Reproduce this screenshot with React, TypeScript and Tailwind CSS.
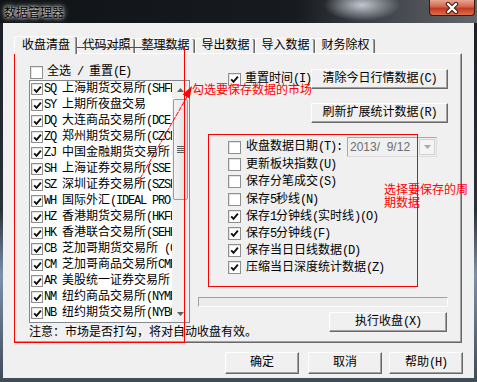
import React from "react";

const ui = "font-['Liberation_Mono','Noto_Sans_CJK_SC',monospace]";
const hei = "font-['Noto_Sans_CJK_SC',sans-serif]";

const markets: [string, string][] = [
  ["SQ", "上海期货交易所(SHFE)"],
  ["SY", "上期所夜盘交易"],
  ["DQ", "大连商品交易所(DCE)"],
  ["ZQ", "郑州期货交易所(CZCE)"],
  ["ZJ", "中国金融期货交易所(CFFEX)"],
  ["SH", "上海证券交易所(SSE)"],
  ["SZ", "深圳证券交易所(SZSE)"],
  ["WH", "国际外汇(IDEAL PRO)"],
  ["HZ", "香港期货交易所(HKFE)"],
  ["HK", "香港联合交易所(SEHK)"],
  ["CB", "芝加哥期货交易所 (CBOT)"],
  ["CM", "芝加哥商品交易所CME"],
  ["AR", "美股统一证券交易所"],
  ["NM", "纽约商品交易所(NYMEX)"],
  ["NB", "纽约期货交易所(NYBOT)"],
];

const periods: { label: string; checked: boolean; gap?: boolean }[] = [
  { label: "更新板块指数(U)", checked: false },
  { label: "保存分笔成交(S)", checked: false },
  { label: "保存5秒线(N)", checked: false, gap: true },
  { label: "保存1分钟线(实时线)(O)", checked: true },
  { label: "保存5分钟线(F)", checked: true },
  { label: "保存当日日线数据(D)", checked: true },
  { label: "压缩当日深度统计数据(Z)", checked: true },
];

const tabs = [
  { label: "代码对照", w: "w-[58px]" },
  { label: "整理数据", w: "w-[60px]" },
  { label: "导出数据", w: "w-[60px]" },
  { label: "导入数据", w: "w-[60px]" },
  { label: "财务除权", w: "w-[60px]" },
];

// half-width (ascii) runs squeezed to 6px per char, like the old bitmap font
const T = ({ s }: { s: string }) => (
  <>
    {s
      .split(/([\x20-\x7e]+)/)
      .filter(Boolean)
      .map((part, i) =>
        /^[\x20-\x7e]+$/.test(part) ? (
          <span key={i} className="tracking-[-1.2px]">
            {part}
          </span>
        ) : (
          <span key={i}>{part}</span>
        )
      )}
  </>
);

const Box = ({ checked = false, small = false }: { checked?: boolean; small?: boolean }) => (
  <span
    className={`flex shrink-0 items-center justify-center border border-[#8e8f8f] bg-white shadow-[inset_1px_1px_0_#e4e4e4] ${
      small ? "h-[12px] w-[12px]" : "h-[13px] w-[13px]"
    }`}
  >
    {checked && (
      <svg width="9" height="9" viewBox="0 0 9 9">
        <path d="M1.2 4.4L3.5 6.9L7.9 1.6" fill="none" stroke="#111" strokeWidth="1.9" />
      </svg>
    )}
  </span>
);

const Btn = ({ label, className = "" }: { label: string; className?: string }) => (
  <button
    className={`flex shrink-0 items-center justify-center whitespace-nowrap border border-b-[#696969] border-l-white border-r-[#696969] border-t-white bg-[#f0f0f0] text-[12px] leading-[14px] text-black shadow-[inset_-1px_-1px_0_#a0a0a0] ${ui} ${className}`}
  >
    <T s={label} />
  </button>
);

const ScrollBar = () => (
  <div className="flex w-[17px] flex-col bg-[#f0f0f0]">
    <div className="flex h-[17px] items-center justify-center">
      <svg width="7" height="4" viewBox="0 0 7 4">
        <path d="M0 4L3.5 0L7 4Z" fill="#606060" />
      </svg>
    </div>
    <div className="mx-[1px] mt-[1px] flex h-[101px] items-center justify-center rounded-[2px] border border-[#9b9b9b] bg-[linear-gradient(90deg,#f3f3f3,#e2e2e2)]">
      <div className="flex flex-col gap-[1px]">
        <span className="h-[1px] w-[7px] bg-[#5c5c5c]" />
        <span className="h-[1px] w-[7px] bg-[#5c5c5c]" />
        <span className="h-[1px] w-[7px] bg-[#5c5c5c]" />
        <span className="h-[1px] w-[7px] bg-[#5c5c5c]" />
      </div>
    </div>
    <div className="flex-1" />
    <div className="flex h-[17px] items-center justify-center">
      <svg width="7" height="4" viewBox="0 0 7 4">
        <path d="M0 0L3.5 4L7 0Z" fill="#606060" />
      </svg>
    </div>
  </div>
);

export default function App() {
  return (
    <div className="relative h-[382px] w-[477px] overflow-hidden bg-[linear-gradient(180deg,#1b1f24_0%,#2b3139_55%,#7c90aa_72%,#3f4a57_100%)] text-[12px] text-black">
      {/* title bar */}
      <div className="flex h-[23px] bg-[radial-gradient(ellipse_38px_16px_at_362px_5px,#c2c8d0,transparent),linear-gradient(90deg,#101316_0%,#171b20_62%,#3a3e44_76%,#62666b_100%)]">
        <span
          className={`self-center pl-[4px] text-[12px] leading-[16px] text-black [text-shadow:0_0_6px_#ffffff,0_0_3px_#ffffff] ${hei}`}
        >
          数据管理器
        </span>
        <div className="ml-auto mr-[2px] flex h-[16px] w-[46px] items-center justify-center rounded-b-[4px] border border-t-0 border-[#4a1208] bg-[linear-gradient(180deg,#e8a594_0%,#d4654d_45%,#c13a1e_55%,#de6e4e_100%)]">
          <svg width="16" height="12" viewBox="0 0 16 12">
            <path d="M4 2L12 10M12 2L4 10" stroke="#3b1c16" strokeWidth="4.4" strokeLinecap="round" />
            <path d="M4 2L12 10M12 2L4 10" stroke="#ffffff" strokeWidth="2.4" strokeLinecap="round" />
          </svg>
        </div>
      </div>

      {/* client area */}
      <div className={`mx-[3px] h-[355px] bg-[#f0f0f0] pl-[11px] pt-[13px] ${ui}`}>
        {/* tabs */}
        <div className="flex h-[17px] items-end">
          <div className="relative z-10 -mb-[1px] flex h-[18px] w-[63px] items-center justify-center rounded-t-[2px] border-l border-t border-l-white border-t-white bg-[#f0f0f0] shadow-[inset_-1px_0_0_#696969,inset_-2px_0_0_#a0a0a0] leading-[14px]">
            收盘清盘
          </div>
          {tabs.map((t) => (
            <div
              key={t.label}
              className={`flex h-[15px] ${t.w} items-center justify-center rounded-t-[2px] border-l border-t border-l-white border-t-white shadow-[inset_-1px_0_0_#696969,inset_-2px_0_0_#a0a0a0] leading-[14px]`}
            >
              {t.label}
            </div>
          ))}
        </div>

        {/* tab page */}
        <div className="relative flex h-[290px] w-[448px] border border-b-[#696969] border-l-white border-r-[#696969] border-t-white shadow-[inset_-1px_-1px_0_#a0a0a0]">
          {/* markets */}
          <div className="ml-[14px] flex w-[161px] flex-col pt-[11px]">
            <div className="flex h-[14px] items-center pl-[1px]">
              <Box />
              <span className="ml-[4px] whitespace-nowrap leading-[14px]">
                <T s="全选 / 重置(E)" />
              </span>
            </div>
            <div className="mt-[1px] flex h-[243px] border border-[#828790] bg-white">
              <div className="flex-1 overflow-hidden">
                {markets.map(([code, name]) => (
                  <div key={code} className="flex h-[16px] items-center whitespace-nowrap pl-[1px]">
                    <Box checked small />
                    <span className="ml-[1px] leading-[16px]">
                      <T s={`${code} ${name}`} />
                    </span>
                  </div>
                ))}
              </div>
              <ScrollBar />
            </div>
            <div className="mt-[2px] h-[16px] whitespace-nowrap leading-[16px]">
              注意：市场是否打勾，将对自动收盘有效。
            </div>
          </div>

          {/* options */}
          <div className="ml-[8px] flex w-[250px] flex-col">
            <div className="mt-[15px] flex h-[20px] items-center">
              <span className="ml-[30px]">
                <Box checked />
              </span>
              <span className="ml-[4px] whitespace-nowrap leading-[14px]">
                <T s="重置时间(I)" />
              </span>
              <Btn className="ml-auto h-[20px] w-[137px]" label="清除今日行情数据(C)" />
            </div>
            <div className="mt-[14px] flex h-[20px] justify-end">
              <Btn className="h-[20px] w-[137px]" label="刷新扩展统计数据(R)" />
            </div>
            <div className="mt-[14px] flex h-[20px] items-center">
              <span className="ml-[30px]">
                <Box />
              </span>
              <span className="ml-[5px] whitespace-nowrap leading-[14px]">
                <T s="收盘数据日期(T):" />
              </span>
              <div className="ml-auto mr-[11px] flex h-[20px] w-[90px] items-center border border-b-[#dcdcdc] border-l-[#a8a8a8] border-r-[#dcdcdc] border-t-[#a8a8a8] bg-[#f0f0f0]">
                <span className="flex-1 pl-[2px] font-['Liberation_Sans',sans-serif] text-[12px] leading-[14px] text-[#6d6d6d]">
                  2013/&nbsp;&nbsp;9/12
                </span>
                <span className="mr-[1px] flex h-[16px] w-[16px] items-center justify-center border border-[#d2d2d2] bg-[#f4f4f4]">
                  <svg width="7" height="4" viewBox="0 0 7 4">
                    <path d="M0 0L3.5 4L7 0Z" fill="#a8a8a8" />
                  </svg>
                </span>
              </div>
            </div>
            {periods.map((p, i) => (
              <div
                key={p.label}
                className={`flex h-[17px] items-center ${i === 0 ? "-mt-[1px]" : p.gap ? "mt-[1px]" : ""}`}
              >
                <span className="ml-[30px]">
                  <Box checked={p.checked} />
                </span>
                <span className="ml-[5px] whitespace-nowrap leading-[14px]">
                  <T s={p.label} />
                </span>
              </div>
            ))}
            <div className="mt-[21px] h-[10px] w-[250px] border border-b-white border-l-[#a0a0a0] border-r-white border-t-[#a0a0a0] bg-[#ececec]" />
            <div className="mt-[5px] flex justify-end pr-[1px]">
              <Btn className="h-[20px] w-[118px]" label="执行收盘(X)" />
            </div>
          </div>
        </div>

        {/* dialog buttons */}
        <div className="mt-[9px] flex pl-[211px]">
          <Btn className="h-[22px] w-[74px]" label="确定" />
          <Btn className="ml-[9px] h-[22px] w-[74px]" label="取消" />
          <Btn className="ml-[7px] h-[22px] w-[74px]" label="帮助(H)" />
        </div>
      </div>

      {/* red annotations */}
      <div className="pointer-events-none absolute left-[14px] top-[47px] h-[296px] w-[171px] border border-[#ff0000]" />
      <div className="pointer-events-none absolute left-[208px] top-[134px] h-[153px] w-[210px] border border-[#ff0000]" />
      <svg className="pointer-events-none absolute left-0 top-0" width="477" height="382">
        <line x1="137" y1="184" x2="188" y2="95" stroke="#ff0000" strokeWidth="1" strokeDasharray="5 1" />
        <path d="M192 86L189.6 98.4L182.6 94.4Z" fill="#ff0000" />
      </svg>
      <div className={`pointer-events-none absolute left-[192px] top-[82px] whitespace-nowrap text-[12px] leading-[14px] text-[#ff0000] ${hei}`}>
        勾选要保存数据的市场
      </div>
      <div className={`pointer-events-none absolute left-[384px] top-[182px] w-[86px] text-[12px] leading-[13px] text-[#ff0000] ${hei}`}>
        选择要保存的周期数据
      </div>
    </div>
  );
}
